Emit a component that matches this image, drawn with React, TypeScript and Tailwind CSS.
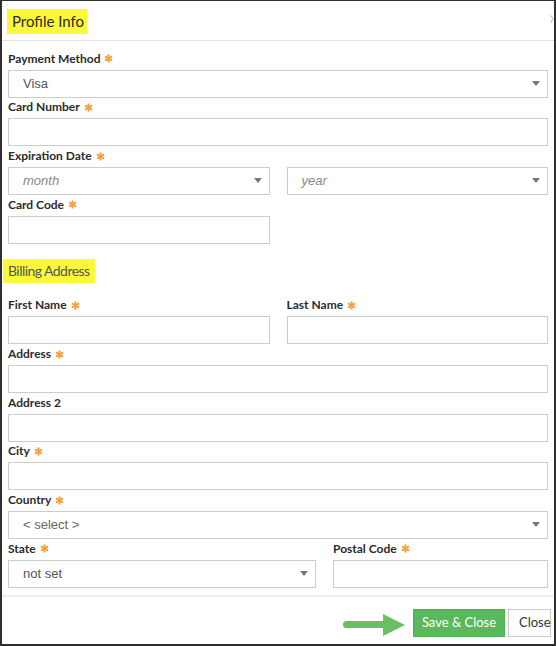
import React from "react";

const Star = () => (
  <svg width="9" height="9" viewBox="0 0 10 10" className="ml-[4px] shrink-0">
    <g stroke="#f2a33a" strokeWidth="2.3" strokeLinecap="butt">
      <line x1="5" y1="0.5" x2="5" y2="9.5" />
      <line x1="1.1" y1="2.75" x2="8.9" y2="7.25" />
      <line x1="1.1" y1="7.25" x2="8.9" y2="2.75" />
    </g>
  </svg>
);

const Label = ({ text, req = true }: { text: string; req?: boolean }) => (
  <div className="h-[20.67px] flex items-center pb-[1px] text-[12px] font-bold text-[#2b2b2b] font-['Lato',sans-serif] leading-none">
    <span>{text}</span>
    {req && <Star />}
  </div>
);

const Input = () => <div className="h-[28px] border border-[#ccc] bg-white" />;

const Select = ({ value, italic = false, color = "#555" }: { value: string; italic?: boolean; color?: string }) => (
  <div className="h-[28px] border border-[#ccc] bg-white flex items-center pl-[14px] pr-[7px]">
    <span
      className={
        "flex-1 text-[13px] font-['Liberation_Sans',Arial,sans-serif] " + (italic ? "italic" : "")
      }
      style={{ color }}
    >
      {value}
    </span>
    <svg width="8" height="5" viewBox="0 0 8 5">
      <path d="M0 0 H8 L4 5 Z" fill="#777" />
    </svg>
  </div>
);

export default function App() {
  return (
    <div className="w-[556px] h-[646px] bg-white border-[#2e2e2e] border-l-2 border-r-2 border-b-2 border-t flex flex-col overflow-hidden relative font-['Lato',sans-serif]">
      {/* header */}
      <div className="h-[40px] shrink-0 border-b border-[#e5e5e5] pl-[5px] pt-[8px] relative">
        <span className="inline-block h-[25px] leading-[25px] bg-[#fbf83a] pl-[5px] pr-[3px] text-[15px] text-[#2b2b2b]">
          Profile Info
        </span>
        <svg width="4" height="8" viewBox="0 0 4 8" className="absolute right-0 top-[14px]">
          <path d="M0.5 0.5 L3.5 4 L0.5 7.5" stroke="#c8c8c8" strokeWidth="1.2" fill="none" />
        </svg>
      </div>

      {/* body */}
      <div className="flex-1 px-[6px] pt-[8px]">
        <Label text="Payment Method" />
        <Select value="Visa" />
        <Label text="Card Number" />
        <Input />
        <Label text="Expiration Date" />
        <div className="grid grid-cols-2 gap-x-[17px]">
          <Select value="month" italic color="#888" />
          <Select value="year" italic color="#888" />
        </div>
        <Label text="Card Code" />
        <div className="grid grid-cols-2 gap-x-[17px]">
          <Input />
          <div />
        </div>

        <div className="mt-[14px] -ml-[5px]">
          <span className="inline-block h-[24px] leading-[24px] bg-[#fbf83a] pl-[5px] pr-[5px] text-[14px] tracking-[-0.55px] text-[#555]">
            Billing Address
          </span>
        </div>

        <div className="mt-[13px] grid grid-cols-2 gap-x-[17px]">
          <div>
            <Label text="First Name" />
            <Input />
          </div>
          <div>
            <Label text="Last Name" />
            <Input />
          </div>
        </div>
        <Label text="Address" />
        <Input />
        <Label text="Address 2" req={false} />
        <Input />
        <Label text="City" />
        <Input />
        <Label text="Country" />
        <Select value="< select >" color="#666" />
        <div className="grid grid-cols-[308px_1fr] gap-x-[17px]">
          <div>
            <Label text="State" />
            <Select value="not set" />
          </div>
          <div>
            <Label text="Postal Code" />
            <Input />
          </div>
        </div>
      </div>

      {/* footer */}
      <div className="h-[49px] shrink-0 border-t-2 border-[#eeeeee] flex items-start justify-end pt-[12px] pr-[3px]">
        <svg width="62" height="22" viewBox="0 0 62 22" className="mt-[5px] mr-[8px]">
          <line x1="3.5" y1="10.5" x2="44" y2="10.5" stroke="#6abf63" strokeWidth="7" strokeLinecap="round" />
          <path d="M40 0 L62 11 L40 22 Z" fill="#6abf63" />
        </svg>
        <button className="h-[28px] w-[92px] bg-[#5cb85c] border border-[#4cae4c] text-white text-[13px] font-['Lato',sans-serif]">
          Save &amp; Close
        </button>
        <button className="ml-[3px] h-[28px] w-[43px] bg-white border border-[#ccc] text-[#333] text-[13px] text-left pl-[10px] font-['Lato',sans-serif]">
          Close
        </button>
      </div>
    </div>
  );
}
